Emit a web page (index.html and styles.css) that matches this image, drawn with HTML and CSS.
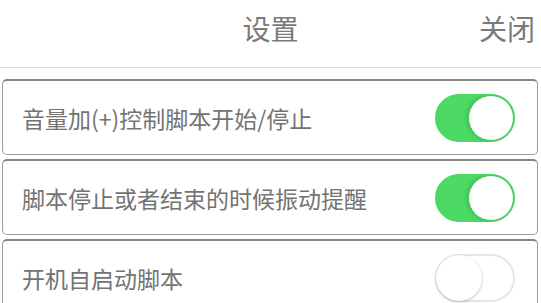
FILE: index.html
```html
<!DOCTYPE html>
<html lang="zh-CN">
<head>
    <meta charset="UTF-8">
    <title>设置</title>
    <link rel="stylesheet" href="styles.css">
</head>
<body>
    <div class="header">
        <span></span>
        <span class="title">设置</span>
        <span class="close">关闭</span>
    </div>
    <ul class="list">
        <li class="item">
            <span class="label">音量加(+)控制脚本开始/停止</span>
            <span class="switch on"><i class="knob"></i></span>
        </li>
        <li class="item">
            <span class="label">脚本停止或者结束的时候振动提醒</span>
            <span class="switch on"><i class="knob"></i></span>
        </li>
        <li class="item">
            <span class="label">开机自启动脚本</span>
            <span class="switch"><i class="knob"></i></span>
        </li>
    </ul>
</body>
</html>
```

FILE: styles.css
```css
*{
    padding:0;
    margin:0;
    box-sizing:border-box;
}
li{
    list-style:none;
}
body{
    font-family:"Noto Sans CJK SC","Noto Sans",sans-serif;
    background:#fff;
    color:#737373;
    overflow:hidden;
}
.header{
    height:68px;
    display:grid;
    grid-template-columns:1fr auto 1fr;
    align-items:start;
    border-bottom:1px solid #dcdcdc;
    color:#7a7a7a;
    font-size:28px;
    line-height:56px;
}
.header .close{
    justify-self:end;
    padding-right:6px;
}
.list{
    padding:11px 3px 0 2px;
}
.item{
    display:flex;
    align-items:center;
    justify-content:space-between;
    height:76px;
    margin-bottom:4px;
    padding:0 22px 0 19px;
    border:1px solid #9c9c9c;
    border-top:2px solid #858585;
    border-radius:5px;
}
.label{
    font-size:23px;
}
.switch{
    position:relative;
    width:80px;
    height:48px;
    border-radius:24px;
    border:2px solid #e6e6e6;
    background:#fff;
}
.switch .knob{
    position:absolute;
    top:-1px;
    left:-1px;
    width:46px;
    height:46px;
    border-radius:50%;
    background:#fff;
    box-shadow:0 1px 3px rgba(0,0,0,0.25);
}
.switch.on{
    background:#4cd964;
    border-color:#4cd964;
}
.switch.on .knob{
    left:auto;
    right:-1px;
    box-shadow:-2px 0 3px rgba(40,150,60,0.35);
    border:1px solid #47c45c;
}
```
